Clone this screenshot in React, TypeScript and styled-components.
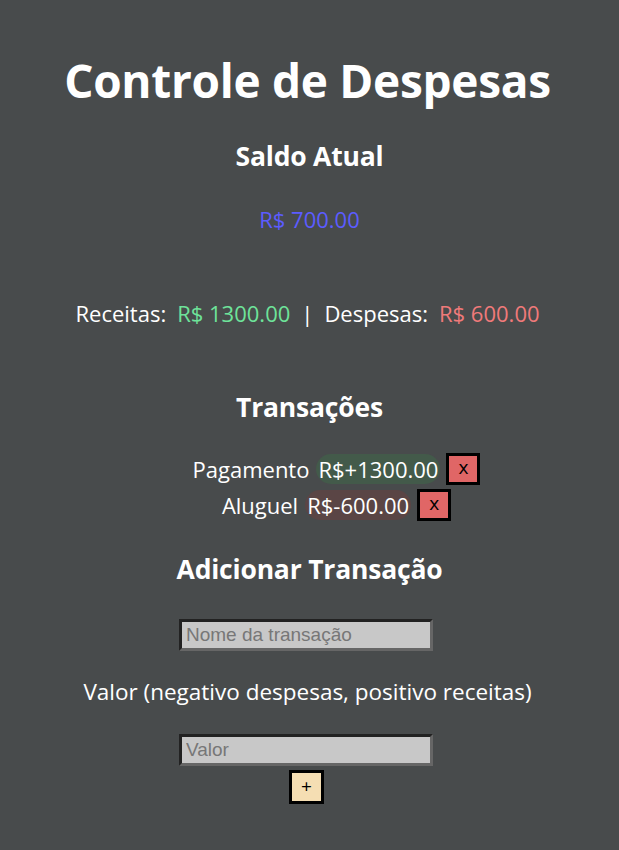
import React from "react"
import styled, { createGlobalStyle } from "styled-components"

const GlobalStyle = createGlobalStyle`
    html, body {
        margin: 0;
        padding: 0;
        background-color: #484b4c;
    }
    body {
        font-family: "Open Sans", "Noto Sans", sans-serif;
        color: #ffffff;
    }
`

const Page = styled.div`
    display: flex;
    flex-direction: column;
    align-items: center;
    padding-top: 52px;
    min-height: 850px;
    box-sizing: border-box;
`

const Title = styled.h1`
    font-size: 46px;
    font-weight: 700;
    margin: 0 4px 0 0;
    line-height: 56px;
    letter-spacing: -0.3px;
`

const SubTitle = styled.h2(({ top }: { top: number }) => `
    font-size: 26.5px;
    font-weight: 700;
    margin: ${top}px 0 0;
    line-height: 32px;
    letter-spacing: -0.2px;
`)

const Balance = styled.div`
    margin-top: 33px;
    font-size: 22px;
    line-height: 28px;
    color: #5c5cff;
`

const Summary = styled.div`
    margin: 66px 4px 0 0;
    font-size: 22px;
    line-height: 28px;
    display: flex;
    gap: 11px;
`

const Amount = styled.span(({ color }: { color: string }) => `
    color: ${color};
`)

const List = styled.ul`
    list-style: none;
    margin: 30px 0 0;
    padding: 0;
    display: flex;
    flex-direction: column;
    align-items: center;
    gap: 4px;
`

const Row = styled.li`
    display: flex;
    align-items: center;
    font-size: 22px;
    line-height: 30px;
    margin-left: 54px;
`

const Pill = styled.span(({ positive }: { positive: boolean }) => `
    background-color: ${positive ? "#435a4a" : "#5a4545"};
    border-radius: 15px;
    margin-left: 7px;
    padding: 0 2px;
`)

const DeleteButton = styled.button`
    width: 34px;
    height: 32px;
    margin-left: 6px;
    background-color: #e06666;
    border: 3px solid #000;
    font-family: "Open Sans", sans-serif;
    font-size: 19px;
    line-height: 1;
    color: #000;
    padding: 0 0 3px;
`

const Input = styled.input(({ top }: { top: number }) => `
    margin: ${top}px 7px 0 0;
    width: 254px;
    height: 32px;
    box-sizing: border-box;
    background-color: #c8c8c8;
    border: 3px solid;
    border-color: #222222 #666666 #666666 #222222;
    font-family: "Liberation Sans", Arial, sans-serif;
    font-size: 19px;
    padding: 0 4px;
    color: #333;
    &::placeholder {
        color: #777777;
    }
`)

const Label = styled.div`
    margin: 27px 4px 0 0;
    font-size: 22.5px;
    line-height: 28px;
`

const AddButton = styled.button`
    margin: 4px 6px 0 0;
    width: 35px;
    height: 34px;
    background-color: #f5deb3;
    border: 3px solid #000;
    font-family: "Open Sans", sans-serif;
    font-size: 19px;
    color: #000;
    padding: 0 0 2px;
`

const App = () => {
    return (
        <>
            <GlobalStyle />
            <Page>
                <Title>Controle de Despesas</Title>
                <SubTitle top={32}>Saldo Atual</SubTitle>
                <Balance>R$ 700.00</Balance>
                <Summary>
                    <span>Receitas:</span>
                    <Amount color="#6ee39a">R$ 1300.00</Amount>
                    <span>|</span>
                    <span>Despesas:</span>
                    <Amount color="#f07a7a">R$ 600.00</Amount>
                </Summary>
                <SubTitle top={64}>Transações</SubTitle>
                <List>
                    <Row>
                        Pagamento<Pill positive>R$+1300.00</Pill>
                        <DeleteButton>x</DeleteButton>
                    </Row>
                    <Row>
                        Aluguel<Pill positive={false}>R$-600.00</Pill>
                        <DeleteButton>x</DeleteButton>
                    </Row>
                </List>
                <SubTitle top={32}>Adicionar Transação</SubTitle>
                <Input top={34} placeholder="Nome da transação" />
                <Label>Valor (negativo despesas, positivo receitas)</Label>
                <Input top={28} placeholder="Valor" />
                <AddButton>+</AddButton>
            </Page>
        </>
    )
}

export default App
